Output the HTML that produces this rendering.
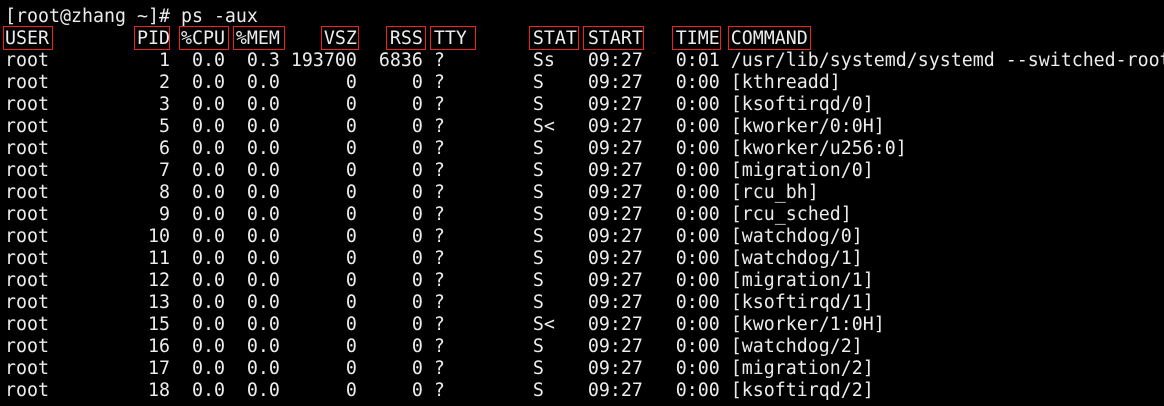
<!DOCTYPE html>
<html><head><meta charset="utf-8"><style>
html,body{margin:0;padding:0;background:#000;width:1164px;height:406px;overflow:hidden;position:relative}
pre{position:absolute;left:5px;top:6px;margin:0;font-family:"DejaVu Sans Mono","Liberation Mono",monospace;font-size:18.27px;line-height:22px;color:#ececec;white-space:pre}
.b{position:absolute;border:1px solid #e22;top:26px;height:24px;box-sizing:border-box}
</style></head><body>
<pre>[root@zhang ~]# ps -aux
USER        PID %CPU %MEM    VSZ   RSS TTY      STAT START   TIME COMMAND
root          1  0.0  0.3 193700  6836 ?        Ss   09:27   0:01 /usr/lib/systemd/systemd --switched-root
root          2  0.0  0.0      0     0 ?        S    09:27   0:00 [kthreadd]
root          3  0.0  0.0      0     0 ?        S    09:27   0:00 [ksoftirqd/0]
root          5  0.0  0.0      0     0 ?        S&lt;   09:27   0:00 [kworker/0:0H]
root          6  0.0  0.0      0     0 ?        S    09:27   0:00 [kworker/u256:0]
root          7  0.0  0.0      0     0 ?        S    09:27   0:00 [migration/0]
root          8  0.0  0.0      0     0 ?        S    09:27   0:00 [rcu_bh]
root          9  0.0  0.0      0     0 ?        S    09:27   0:00 [rcu_sched]
root         10  0.0  0.0      0     0 ?        S    09:27   0:00 [watchdog/0]
root         11  0.0  0.0      0     0 ?        S    09:27   0:00 [watchdog/1]
root         12  0.0  0.0      0     0 ?        S    09:27   0:00 [migration/1]
root         13  0.0  0.0      0     0 ?        S    09:27   0:00 [ksoftirqd/1]
root         15  0.0  0.0      0     0 ?        S&lt;   09:27   0:00 [kworker/1:0H]
root         16  0.0  0.0      0     0 ?        S    09:27   0:00 [watchdog/2]
root         17  0.0  0.0      0     0 ?        S    09:27   0:00 [migration/2]
root         18  0.0  0.0      0     0 ?        S    09:27   0:00 [ksoftirqd/2]</pre>
<div class="b" style="left:3px;width:50px"></div>
<div class="b" style="left:134px;width:36px"></div>
<div class="b" style="left:179px;width:50px"></div>
<div class="b" style="left:233px;width:52px"></div>
<div class="b" style="left:321px;width:38px"></div>
<div class="b" style="left:386px;width:40px"></div>
<div class="b" style="left:430px;width:46px"></div>
<div class="b" style="left:529px;width:50px"></div>
<div class="b" style="left:583px;width:61px"></div>
<div class="b" style="left:672px;width:49px"></div>
<div class="b" style="left:728px;width:83px"></div>
</body></html>
